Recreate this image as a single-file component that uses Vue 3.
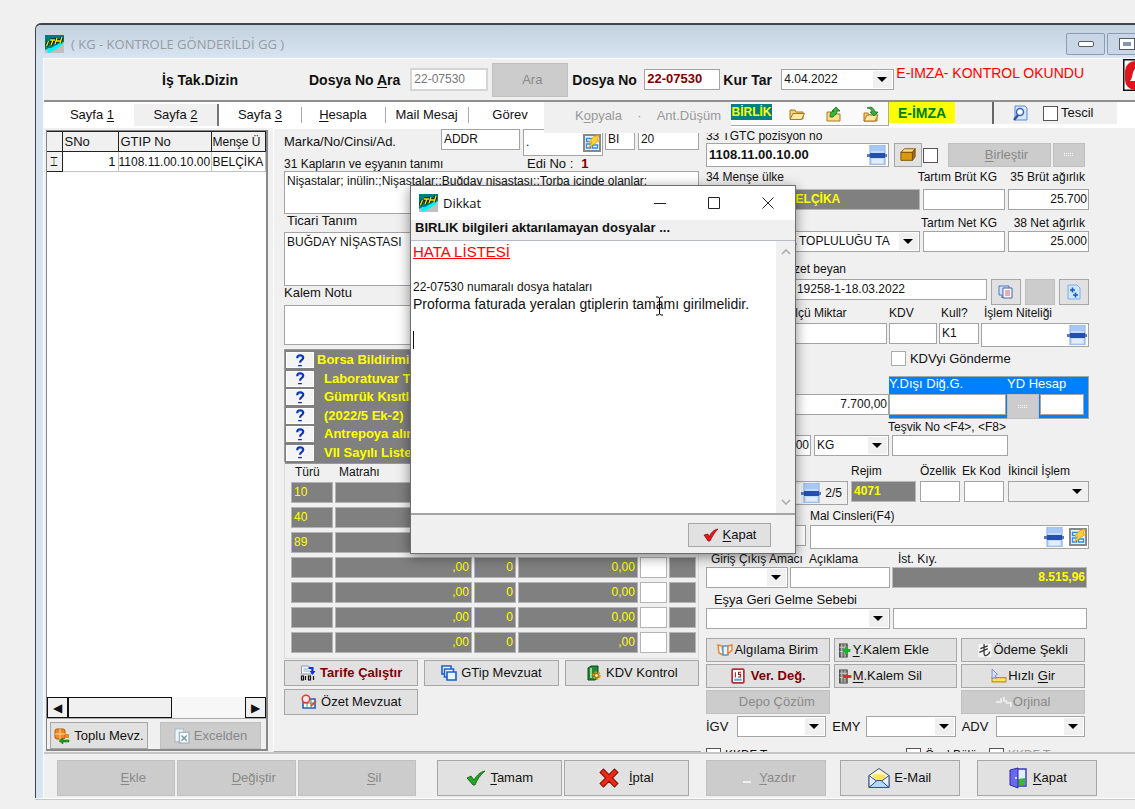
<template>
    <div class="desktop">
        <!-- shared icon shapes -->
        <svg class="defs" aria-hidden="true">
            <symbol id="i-logo" viewBox="0 0 19 18">
                <rect width="19" height="18" fill="#007c80" />
                <path d="M0 18v-3l4-2 3 1 12-7v11z" fill="#c0c0c0" />
                <path d="M2 14l4-1 9-5 4-1-3 4-8 5-5 2z" fill="#00f4f4" />
                <path d="M3.500 6l-2 5M5 5h5M8 5l-2 5M12 3l-2 6M17 2l-2 6M11 6h5" fill="none" stroke="#000" stroke-width="3" />
                <path d="M3.500 6l-2 5M5 5h5M8 5l-2 5M12 3l-2 6M17 2l-2 6M11 6h5" fill="none" stroke="#f4f000" stroke-width="1.400" />
            </symbol>
            <symbol id="i-lookup" viewBox="0 0 20 20">
                <path d="M3 0h15v20H3z" fill="#c4dcfa" stroke="#7fa6e2" />
                <path d="M4 1h13v5H4z" fill="#a7c8f6" />
                <path d="M5 15h11M5 17h11" stroke="#fff" />
                <path d="M0 9h20v3H0z" fill="#5a78b8" />
                <path d="M3 8h15v5H3z" fill="#244fae" />
            </symbol>
            <symbol id="i-bolt" viewBox="0 0 18 18">
                <rect x="1" y="1" width="16" height="16" fill="#e8f4fd" stroke="#888" stroke-width="2" />
                <path d="M3.500 4.500h5v3h-5zM3.500 10h4v4h-4zM9.500 11h5v3h-5z" fill="#fff" stroke="#2d8be8" stroke-width="1.400" />
                <path d="M10 3l6-2-2 5h3L5 14l4-6H6z" fill="#ffd23c" stroke="#e69a10" stroke-width=".8" />
            </symbol>
            <symbol id="i-help" viewBox="0 0 12 14">
                <path d="M3 4.500c0-4 6.500-4 6.500-.5C9.500 6.500 6 6 6 9.500" fill="none" stroke="#0a34b0" stroke-width="2.300" />
                <path d="M4 3.500c1-1.500 3-1.500 4 0" fill="none" stroke="#4f8ef5" stroke-width=".8" />
                <path d="M4 12.500h4" stroke="#0a2c98" stroke-width="1.400" />
            </symbol>
            <symbol id="i-folder" viewBox="0 0 16 16">
                <path d="M1 13V4h5l1 2h7v7z" fill="#f5cf70" stroke="#a87820" />
                <path d="M1 13.500l3-6h11.500l-3 6z" fill="#ffe9a6" stroke="#a87820" />
            </symbol>
            <symbol id="i-up" viewBox="0 0 16 16">
                <path d="M1 15V6h4l1 2h8v7z" fill="#ffdf8a" stroke="#a87820" />
                <path d="M4 11c0-4 1-6 4-6H6l4-4 4 4h-3c0 3-2 4-4 6z" fill="#36b43a" stroke="#136c18" stroke-width=".8" />
            </symbol>
            <symbol id="i-next" viewBox="0 0 16 16">
                <path d="M1 15V7h4l1 2h8v6z" fill="#f5cf70" stroke="#a87820" />
                <path d="M1 15l3-6h11l-3 6z" fill="#ffe9a6" stroke="#a87820" />
                <path d="M4 2c4-2 7 0 8 4h3l-4 4-4-4h2c0-2-2-4-5-4z" fill="#36b43a" stroke="#136c18" stroke-width=".8" />
            </symbol>
            <symbol id="i-preview" viewBox="0 0 16 16">
                <path d="M3 1h10l2 2v12H3z" fill="#d5e6ff" stroke="#5c88d0" />
                <circle cx="8" cy="7" r="3.500" fill="#fff" stroke="#3565b8" stroke-width="1.500" />
                <path d="M6 10l-4 5" stroke="#2e56a4" stroke-width="2.500" />
            </symbol>
            <symbol id="i-box" viewBox="0 0 18 16">
                <path d="M1 5l4-4h12l-3 4z" fill="#ffe08a" stroke="#7a4c00" />
                <path d="M1 5h13v9H1z" fill="#d79a10" stroke="#7a4c00" />
                <path d="M14 5l3-4v9l-3 4z" fill="#a86c00" stroke="#7a4c00" />
            </symbol>
            <symbol id="i-note" viewBox="0 0 16 16">
                <path d="M1 2h10v9H6l-2 3v-3H1z" fill="#cfe2ff" stroke="#4a78c8" />
                <path d="M5 4h9v10H5z" fill="#fff" stroke="#4a5fa8" />
                <path d="M7 7h5M7 9h5M7 11h5" stroke="#c06070" />
            </symbol>
            <symbol id="i-plus" viewBox="0 0 14 16">
                <path d="M1 1h9l3 3v11H1z" fill="#cfe6ff" stroke="#79aef0" />
                <path d="M3 6h5M5.500 3.500v5M6 11h5M8.500 8.500v5" stroke="#1858c0" stroke-width="1.600" />
            </symbol>
            <symbol id="i-book" viewBox="0 0 16 12">
                <path d="M1 1l4 1 1 9-4-2z" fill="#fff" stroke="#f08030" stroke-width="1.500" />
                <path d="M6 11V2h5v9z" fill="#e8f4ff" stroke="#3ba0e8" stroke-width="1.300" />
                <path d="M11 2l4-1v5l-4 4z" fill="#fff" stroke="#f08030" stroke-width="1.500" />
            </symbol>
            <symbol id="i-addrow" viewBox="0 0 12 14">
                <path d="M1 1h7v12H1z" fill="#777" stroke="#444" />
                <path d="M3 1v12M6 1v12M1 4h7M1 8h7" stroke="#ddd" stroke-width=".7" />
                <path d="M4 7h7M7.500 3.500v7" stroke="#18b428" stroke-width="2.600" />
            </symbol>
            <symbol id="i-delrow" viewBox="0 0 12 14">
                <path d="M1 1h7v12H1z" fill="#777" stroke="#444" />
                <path d="M3 1v12M6 1v12M1 4h7M1 8h7" stroke="#ddd" stroke-width=".7" />
                <path d="M4 7h8" stroke="#e02818" stroke-width="2.600" />
            </symbol>
            <symbol id="i-lira" viewBox="0 0 14 16">
                <path d="M0 1h14v14H0z" fill="#f6f6f6" />
                <path d="M6 1v10c0 5 6 1 6-2M2 6l8-3M1 10l9-4" fill="none" stroke="#333" stroke-width="1.300" />
            </symbol>
            <symbol id="i-cal" viewBox="0 0 13 15">
                <rect x="1" y="1" width="11" height="13" rx="1" fill="#fff" stroke="#b03038" stroke-width="1.600" />
                <path d="M3 11h7" stroke="#5ea6dd" stroke-width="2" />
                <path d="M4 4v5M9.500 4H7v2h2v2.500H6.500" fill="none" stroke="#902020" />
            </symbol>
            <symbol id="i-ruler" viewBox="0 0 15 13">
                <path d="M1 8h13v4H1z" fill="#ffe45c" stroke="#c09010" />
                <path d="M1 0l5 5-2 1 1 3-2-1-2 1z" fill="#dde0ff" stroke="#7080c0" stroke-width=".8" />
            </symbol>
            <symbol id="i-tarife" viewBox="0 0 15 16">
                <path d="M1 1h7l3 3v5H1z" fill="#f4f8fd" stroke="#9098a8" />
                <path d="M3 4h5M3 6h6" stroke="#8ab0e0" />
                <path d="M8 3h4v5" fill="none" stroke="#1030f0" stroke-width="2" />
                <path d="M9 6h6l-3 4z" fill="#1030f0" />
                <path d="M1 11h2v4H1zM5 11v4M8 11h2v4H8zM13 11v4" fill="none" stroke="#111" stroke-width="1.200" />
            </symbol>
            <symbol id="i-windows" viewBox="0 0 16 16">
                <path d="M1 1h9v8H1z" fill="#fff" stroke="#1460cc" stroke-width="1.600" />
                <path d="M3.500 4h9v8h-9z" fill="#fff" stroke="#1460cc" stroke-width="1.600" />
                <path d="M6 7h9v8H6z" fill="#eaf4ff" stroke="#1460cc" stroke-width="1.600" />
            </symbol>
            <symbol id="i-kdv" viewBox="0 0 14 16">
                <path d="M1 3l3-2h7v12l-3 2H1z" fill="#208838" stroke="#0a4c18" />
                <path d="M4 3v10" stroke="#b8f0b0" stroke-width="1.500" />
                <circle cx="9.500" cy="10.500" r="3" fill="none" stroke="#e09010" stroke-width="2.500" stroke-dasharray="2 1" />
                <circle cx="9.500" cy="10.500" r="2" fill="#fff0a0" stroke="#b06800" />
            </symbol>
            <symbol id="i-ozet" viewBox="0 0 16 16">
                <path d="M2 5h12v9H2z" fill="#fff" stroke="#1860c8" stroke-width="1.600" />
                <path d="M2 9h12M6 5v9M10 5v9" stroke="#38a060" />
                <circle cx="5" cy="5" r="3.800" fill="#fbe8ec" stroke="#e03838" stroke-width="1.500" />
                <path d="M15 7l-5 5" stroke="#e05030" stroke-width="2" />
            </symbol>
            <symbol id="i-cubes" viewBox="0 0 16 16">
                <rect x="1" y="1" width="10" height="10" rx="2" fill="#f08820" stroke="#b85808" />
                <path d="M1 6h10M6 1v10" stroke="#ffd8a0" />
                <rect x="11" y="6" width="4" height="4" fill="#f08820" />
                <path d="M15 12H9v-2l-4 3 4 3v-2h6z" fill="#18a020" stroke="#0a6810" stroke-width=".5" />
            </symbol>
            <symbol id="i-excel" viewBox="0 0 15 15">
                <path d="M1 1h8v12H1z" fill="#eef4f8" stroke="#a8bccb" />
                <path d="M5 4h9v10H5z" fill="#fff" stroke="#8fa8bb" />
                <path d="M7 7l5 5M12 7l-5 5" stroke="#6d9aa8" stroke-width="1.300" />
            </symbol>
            <symbol id="i-ok" viewBox="0 0 20 16">
                <path d="M1 8l4-2 3 4c3-5 6-8 11-9-5 4-8 9-10 14H7z" fill="#22a822" stroke="#0c5c10" stroke-width=".8" />
            </symbol>
            <symbol id="i-redok" viewBox="0 0 16 14">
                <path d="M1 7l4-1 1 3c2-4 4-7 9-8-4 4-6 8-8 12H5z" fill="#f01414" stroke="#780808" stroke-width=".7" />
            </symbol>
            <symbol id="i-cross" viewBox="0 0 18 18">
                <path d="M4 1l5 5 5-5 3 3-5 5 5 5-3 3-5-5-5 5-3-3 5-5-5-5z" fill="#ee2a14" stroke="#8c0e04" />
            </symbol>
            <symbol id="i-mail" viewBox="0 0 22 21">
                <path d="M1 8l10-7 10 7v12H1z" fill="#fff8c8" stroke="#34508c" />
                <path d="M5 7h12v5l-6 4-6-4z" fill="#ffe458" />
                <path d="M1 8l8 6-8 6zM21 8l-8 6 8 6z" fill="#e4f0ff" stroke="#34508c" />
                <path d="M1 20l8-7h4l8 7z" fill="#b4d8ff" stroke="#34508c" />
            </symbol>
            <symbol id="i-door" viewBox="0 0 18 22">
                <path d="M8 2h9v17H8z" fill="#dff0ff" stroke="#3838b8" stroke-width="1.400" />
                <path d="M9 12l7-1v7H9z" fill="#38b838" />
                <path d="M1 3l8-2v20l-8-3z" fill="#6a68f0" stroke="#2c28a0" />
                <circle cx="7" cy="11" r="1" fill="#fff" />
            </symbol>
            <symbol id="i-dots" viewBox="0 0 10 4">
                <path d="M0 .5h10M0 2.500h10" stroke="#fff" stroke-dasharray="1 1" />
            </symbol>
            <symbol id="i-bell" viewBox="0 0 32 32">
                <rect width="32" height="32" fill="#fff" stroke="#111" stroke-width="3" />
                <rect x="2" y="2" width="29" height="29" rx="10" fill="#e0141c" />
                <path d="M7 22c4-4 1-13 9-14 8 1 5 10 9 14z" fill="#fff" />
            </symbol>
        </svg>

        <div class="window">
            <header class="titlebar">
                <svg class="logo"><use href="#i-logo" /></svg>
                <span class="caption">( KG - KONTROLE GÖNDERİLDİ GG )</span>
                <div class="sysbuttons">
                    <button aria-label="Küçült"><span class="min-mark"></span></button>
                    <button aria-label="Büyüt"><span class="max-mark"></span></button>
                </div>
            </header>

            <div class="frame">
                <section class="search-bar">
                    <b class="is-tak">İş Tak.Dizin</b>
                    <label class="b" for="ara">Dosya No <u>A</u>ra</label>
                    <input id="ara" class="ara-input" value="22-07530" disabled>
                    <button class="btn off ara-btn" disabled>Ara</button>
                    <label class="b" for="dosya">Dosya No</label>
                    <input id="dosya" class="dosya-input" value="22-07530">
                    <label class="b" for="kur">Kur Tar</label>
                    <span class="combo kur"><select id="kur"><option>4.04.2022</option></select></span>
                    <span class="alert">E-IMZA- KONTROL OKUNDU</span>
                    <svg class="bell"><use href="#i-bell" /></svg>
                </section>

                <nav class="tabs">
                    <button class="tab t1">Sayfa <u>1</u></button>
                    <button class="tab t2 active">Sayfa <u>2</u></button>
                    <button class="tab t3">Sayfa <u>3</u></button>
                    <button class="tab t4"><u>H</u>esapla</button>
                    <button class="tab t5">Mail Mesaj</button>
                    <button class="tab t6">Görev</button>
                    <div class="dead-tabs">
                        <button disabled>K<u>o</u>pyala</button>
                        <span>·</span>
                        <button disabled class="ant">Ant.Düşüm</button>
                    </div>
                    <div class="tools">
                        <button class="birlik">BİRLİK</button>
                        <button class="tool" aria-label="Aç"><svg><use href="#i-folder" /></svg></button>
                        <button class="tool" aria-label="Yükle"><svg><use href="#i-up" /></svg></button>
                        <button class="tool" aria-label="Aktar"><svg><use href="#i-next" /></svg></button>
                    </div>
                    <button class="eimza">E-İMZA</button>
                    <div class="tescil">
                        <button class="tool" aria-label="Önizleme"><svg><use href="#i-preview" /></svg></button>
                        <label><input type="checkbox"> Tescil</label>
                    </div>
                </nav>

                <main class="content">
                    <aside class="list">
                        <table>
                            <thead>
                                <tr><th></th><th>SNo</th><th>GTIP No</th><th class="mense">Menşe Ü</th></tr>
                            </thead>
                            <tbody>
                                <tr><td class="mark">⌶</td><td class="num">1</td><td class="code">1108.11.00.10.00</td><td class="mense">BELÇİKA</td></tr>
                            </tbody>
                        </table>
                        <div class="hscroll">
                            <button aria-label="Sola">◀</button>
                            <span class="thumb"></span>
                            <button aria-label="Sağa">▶</button>
                        </div>
                        <div class="list-buttons">
                            <button class="btn"><svg class="ic16"><use href="#i-cubes" /></svg>Toplu Mevz.</button>
                            <button class="btn off" disabled><svg class="ic16"><use href="#i-excel" /></svg>Excelden</button>
                        </div>
                    </aside>

                    <section class="middle">
                        <div class="marka">
                            <label for="marka">Marka/No/Cinsi/Ad.</label>
                            <input id="marka" class="m1" value="ADDR">
                            <span class="with-icon m2"><input aria-label="Marka no" value="."><svg class="ic18"><use href="#i-bolt" /></svg></span>
                            <input class="m3" aria-label="Cins" value="BI">
                            <input class="m4" aria-label="Adet" value="20">
                        </div>
                        <div class="kap-label">
                            <label for="kap">31 Kapların ve eşyanın tanımı</label>
                            <span>Edi No :</span><b>1</b>
                        </div>
                        <textarea id="kap" class="kap" :value="kaplar"></textarea>
                        <label class="tic-label" for="tic">Ticari Tanım</label>
                        <textarea id="tic" class="tic" value="BUĞDAY NİŞASTASI"></textarea>
                        <label class="not-label" for="kalemnot">Kalem Notu</label>
                        <textarea id="kalemnot" class="kalemnot"></textarea>

                        <div class="warnings">
                            <div v-for="(w, i) in warnings" :key="i" class="warning">
                                <button aria-label="Yardım"><svg><use href="#i-help" /></svg></button>
                                <b>{{ w }}</b>
                            </div>
                        </div>

                        <div class="taxes">
                            <table>
                                <thead>
                                    <tr><th class="c1">Türü</th><th class="c2">Matrahı</th><th class="c3"></th><th class="c4"></th><th class="c5"></th><th class="c6"></th></tr>
                                </thead>
                                <tbody>
                                    <tr v-for="(t, i) in taxes" :key="i">
                                        <td class="type">{{ t.type }}</td>
                                        <td>{{ t.base }}</td>
                                        <td>{{ t.rate }}</td>
                                        <td>{{ t.amount }}</td>
                                        <td class="white"></td>
                                        <td></td>
                                    </tr>
                                </tbody>
                            </table>
                        </div>

                        <div class="mid-buttons">
                            <button class="btn dark"><svg class="ic16"><use href="#i-tarife" /></svg>Tarife Çalıştır</button>
                            <button class="btn"><svg class="ic16"><use href="#i-windows" /></svg>GTip Mevzuat</button>
                            <button class="btn"><svg class="ic16"><use href="#i-kdv" /></svg>KDV Kontrol</button>
                            <button class="btn"><svg class="ic16"><use href="#i-ozet" /></svg>Özet Mevzuat</button>
                        </div>
                    </section>

                    <section class="right">
                        <div class="row gtc-label"><label for="gtc">33 TGTC pozisyon no</label></div>
                        <div class="row code-row">
                            <span class="with-icon grow"><input id="gtc" class="bold" value="1108.11.00.10.00"><svg class="ic20"><use href="#i-lookup" /></svg></span>
                            <button class="btn box-btn" aria-label="Paket"><svg class="ic16"><use href="#i-box" /></svg></button>
                            <input type="checkbox" aria-label="Seç">
                            <button class="btn off birlestir" disabled><span><u>B</u>irleştir</span></button>
                            <button class="btn off more" disabled aria-label="Diğer"><svg><use href="#i-dots" /></svg></button>
                        </div>

                        <div class="row weights">
                            <label for="ulke">34 Menşe ülke</label><label for="tbrut">Tartım Brüt KG</label><label for="brut">35 Brüt ağırlık</label>
                        </div>
                        <div class="row weights">
                            <input id="ulke" class="gray belcika" value="BELÇİKA"><input id="tbrut"><input id="brut" class="num" value="25.700">
                        </div>
                        <div class="row weights">
                            <span></span><label for="tnet">Tartım Net KG</label><label for="net">38 Net ağırlık</label>
                        </div>
                        <div class="row weights">
                            <span class="combo"><select aria-label="Topluluk" class="avrupa"><option>AVRUPA TOPLULUĞU TA</option></select></span><input id="tnet"><input id="net" class="num" value="25.000">
                        </div>

                        <div class="row beyan-label"><label for="beyan">40 Özet beyan</label></div>
                        <div class="row beyan">
                            <input id="beyan" value="19258-1-18.03.2022">
                            <button class="btn" aria-label="Notlar"><svg class="ic16"><use href="#i-note" /></svg></button>
                            <button class="btn off" disabled aria-label="Boş"></button>
                            <button class="btn" aria-label="Ekle"><svg class="ic16"><use href="#i-plus" /></svg></button>
                        </div>

                        <div class="row olcu">
                            <label for="olcu">Ölçü Miktar</label><label for="kdv">KDV</label><label for="kull">Kull?</label><label for="nitelik">İşlem Niteliği</label>
                        </div>
                        <div class="row olcu">
                            <input id="olcu"><input id="kdv"><input id="kull" value="K1"><span class="with-icon"><input id="nitelik"><svg class="ic20"><use href="#i-lookup" /></svg></span>
                        </div>
                        <div class="row kdv-check"><label><input type="checkbox"> KDVyi Gönderme</label></div>

                        <div class="row abroad">
                            <input class="num" aria-label="Tutar" value="7.700,00">
                            <div class="blue">
                                <label for="ydisi">Y.Dışı Diğ.G.</label><label class="ydh" for="ydh">YD Hesap</label>
                                <input id="ydisi"><button class="btn off more" disabled aria-label="Diğer"><svg><use href="#i-dots" /></svg></button><input id="ydh">
                            </div>
                        </div>
                        <div class="row tesvik"><span></span><span></span><label for="tesvik">Teşvik No &lt;F4&gt;, &lt;F8&gt;</label></div>
                        <div class="row tesvik">
                            <input class="num" aria-label="Miktar" value="25.000,00"><span class="combo"><select aria-label="Birim"><option>KG</option></select></span><input id="tesvik">
                        </div>

                        <div class="row rejim">
                            <span></span><label for="rejim">Rejim</label><label for="ozellik">Özellik</label><label for="ekkod">Ek Kod</label><label for="ikincil">İkincil İşlem</label>
                        </div>
                        <div class="row rejim">
                            <span class="with-icon step"><input aria-label="Kod"><svg class="ic20"><use href="#i-lookup" /></svg><i>2/5</i></span>
                            <input id="rejim" class="gray" value="4071"><input id="ozellik"><input id="ekkod">
                            <span class="combo plain"><select id="ikincil"><option></option></select></span>
                        </div>

                        <div class="row mal"><span></span><label for="mal">Mal Cinsleri(F4)</label></div>
                        <div class="row mal">
                            <input aria-label="Cins kodu"><span class="with-icon"><input id="mal"><svg class="ic20"><use href="#i-lookup" /></svg><svg class="ic18"><use href="#i-bolt" /></svg></span>
                        </div>

                        <div class="row giris">
                            <label for="giris">Giriş Çıkış Amacı</label><label for="aciklama">Açıklama</label><label for="kiy">İst. Kıy.</label>
                        </div>
                        <div class="row giris">
                            <span class="combo"><select id="giris"><option></option></select></span><input id="aciklama"><input id="kiy" class="gray num" value="8.515,96">
                        </div>
                        <div class="row esya-label"><label for="esya">Eşya Geri Gelme Sebebi</label></div>
                        <div class="row esya">
                            <span class="combo"><select id="esya"><option></option></select></span><input aria-label="Sebep açıklaması">
                        </div>

                        <div class="row thirds">
                            <button class="btn"><svg class="ic16"><use href="#i-book" /></svg>Algılama Birim</button>
                            <button class="btn start"><svg class="ic14"><use href="#i-addrow" /></svg><span><u>Y</u>.Kalem Ekle</span></button>
                            <button class="btn"><svg class="ic14"><use href="#i-lira" /></svg>Ödeme Şekli</button>
                        </div>
                        <div class="row thirds">
                            <button class="btn dark"><svg class="ic16"><use href="#i-cal" /></svg>Ver. Değ.</button>
                            <button class="btn start"><svg class="ic14"><use href="#i-delrow" /></svg><span><u>M</u>.Kalem Sil</span></button>
                            <button class="btn"><svg class="ic16"><use href="#i-ruler" /></svg><span>Hızlı <u>G</u>ir</span></button>
                        </div>
                        <div class="row thirds">
                            <button class="btn off depo" disabled>Depo Çözüm</button>
                            <span></span>
                            <button class="btn off" disabled><svg class="ic16" viewBox="0 0 16 12"><path d="M0 6h5V2M8 1v4h3M10 7h5v4" fill="none" stroke="#f4f4f4" stroke-width="1.500" /></svg>Orjinal</button>
                        </div>
                        <div class="row levies">
                            <label for="igv">İGV</label><span class="combo"><select id="igv"><option></option></select></span>
                            <label for="emy">EMY</label><span class="combo"><select id="emy"><option></option></select></span>
                            <label for="adv">ADV</label><span class="combo"><select id="adv"><option></option></select></span>
                        </div>
                        <div class="row flags">
                            <label><input type="checkbox"> KKDF Tam.</label>
                            <label><input type="checkbox" checked> Özel Bölüm</label>
                            <label class="faint"><input type="checkbox"> KKDF Tam.</label>
                        </div>
                    </section>
                </main>

                <footer class="actions">
                    <div class="group g3">
                        <button class="btn off" disabled><span><u>E</u>kle</span></button>
                        <button class="btn off" disabled><span><u>D</u>eğiştir</span></button>
                        <button class="btn off" disabled><span><u>S</u>il</span></button>
                    </div>
                    <div class="group g2">
                        <button class="btn"><svg class="ic20"><use href="#i-ok" /></svg><span><u>T</u>amam</span></button>
                        <button class="btn wide-gap"><svg class="ic20"><use href="#i-cross" /></svg><span><u>İ</u>ptal</span></button>
                    </div>
                    <button class="btn off yazdir" disabled><i class="dash"></i><span><u>Y</u>azdır</span></button>
                    <button class="btn mail"><svg class="ic22"><use href="#i-mail" /></svg>E-Mail</button>
                    <button class="btn kapat"><svg class="ic22"><use href="#i-door" /></svg><span><u>K</u>apat</span></button>
                </footer>
            </div>
        </div>

        <!-- error list dialog -->
        <div v-if="open" class="dialog" role="dialog" aria-label="Dikkat">
            <header class="dlg-title">
                <svg class="logo"><use href="#i-logo" /></svg>
                <span>Dikkat</span>
                <button aria-label="Küçült"><svg viewBox="0 0 12 12"><path d="M0 6.500h12" /></svg></button>
                <button aria-label="Büyüt"><svg viewBox="0 0 12 12"><path d="M.5.5h11v11H.5z" /></svg></button>
                <button aria-label="Kapat" @click="open = false"><svg viewBox="0 0 12 12"><path d="M.5.5l11 11M11.500.5l-11 11" /></svg></button>
            </header>
            <b class="dlg-head">BIRLIK bilgileri aktarılamayan dosyalar ...</b>
            <div class="dlg-body">
                <div class="dlg-text">
                    <p class="red">HATA LİSTESİ</p>
                    <p class="small">22-07530 numaralı dosya hataları</p>
                    <p>Proforma faturada yeralan gtiplerin tamamı girilmelidir.</p>
                    <span class="caret"></span>
                </div>
                <div class="vscroll">
                    <svg viewBox="0 0 10 6"><path d="M1 5l4-4 4 4" /></svg>
                    <svg viewBox="0 0 10 6"><path d="M1 1l4 4 4-4" /></svg>
                </div>
                <svg class="pointer" viewBox="0 0 9 20"><path d="M1 1h2l1.500 1L6 1h2M4.500 2v16M1 19h2l1.500-1L6 19h2" /></svg>
            </div>
            <footer class="dlg-foot">
                <button class="btn" @click="open = false"><svg class="ic16"><use href="#i-redok" /></svg><span><u>K</u>apat</span></button>
            </footer>
        </div>
    </div>
</template>

<script setup>
import { ref } from 'vue';

const open = ref(true);

const kaplar = 'Nişastalar; inülin:;Nişastalar:;Buğday nişastası:;Torba içinde olanlar;';

const warnings = [
    'Borsa Bildirimi',
    'Laboratuvar Tahlili',
    'Gümrük Kısıtlaması',
    '(2022/5 Ek-2)',
    'Antrepoya alınan',
    'VII Sayılı Liste'
];

const taxes = [
    { type: '10', base: '', rate: '', amount: '' },
    { type: '40', base: '', rate: '', amount: '' },
    { type: '89', base: '', rate: '', amount: '' },
    { type: '', base: ',00', rate: '0', amount: '0,00' },
    { type: '', base: ',00', rate: '0', amount: '0,00' },
    { type: '', base: ',00', rate: '0', amount: '0,00' },
    { type: '', base: ',00', rate: '0', amount: ',00' }
];
</script>

<style>
body {
    background: #f0f0f0;
    overflow: hidden;
}
</style>

<style scoped>
.desktop {
    position: relative;
    box-sizing: border-box;
    height: 100vh;
    padding: 23px 0 11px 35px;
    overflow: hidden;
    background: #f0f0f0;
    color: #111;
    font: 13px/14px "Liberation Sans", Arial, sans-serif;
}
.desktop * {
    box-sizing: border-box;
}
.defs {
    position: absolute;
    width: 0;
    height: 0;
}
svg {
    display: block;
    flex-shrink: 0;
}
.ic14 { width: 14px; height: 15px; }
.ic16 { width: 16px; height: 16px; }
.ic18 { width: 18px; height: 18px; }
.ic20 { width: 20px; height: 20px; }
.ic22 { width: 22px; height: 22px; }
.logo { width: 19px; height: 18px; }

/* window frame */
.window {
    height: 100%;
    display: flex;
    flex-direction: column;
    border: solid #41444b;
    border-width: 2px 0 0 1px;
    border-top-left-radius: 6px;
    background: #d7e4f2;
    box-shadow: 0 1px 0 #fff, 0 2px 0 #c8c8c8;
}
.titlebar {
    flex: 0 0 33px;
    display: flex;
    align-items: center;
    padding: 5px 0 0 9px;
    overflow: hidden;
    border-top-left-radius: 5px;
    background: linear-gradient(#c3d0de, #d7e4f2);
}
.caption {
    margin-left: 7px;
    color: #969ba2;
    font-family: "Open Sans", "Noto Sans", sans-serif;
    font-size: 13px;
    line-height: 18px;
}
.sysbuttons {
    display: flex;
    gap: 2px;
    margin-left: auto;
    margin-right: -11px;
}
.sysbuttons button {
    display: grid;
    place-items: center;
    width: 39px;
    height: 22px;
    padding: 0;
    border: 1px solid #8d9cb0;
    border-radius: 2px;
    background: #c9d6e5;
}
.min-mark {
    width: 16px;
    height: 6px;
    border: 1px solid #555b66;
    border-radius: 2px;
    background: #fff;
}
.max-mark {
    width: 16px;
    height: 12px;
    border: 1px solid #555b66;
    background: #8898ac;
    box-shadow: inset 0 0 0 3px #fff;
}
.frame {
    flex: 1;
    min-height: 0;
    margin-left: 7px;
    display: flex;
    flex-direction: column;
    border-left: 1px solid #fff;
    background: #f0f0f0;
}

/* controls */
button,
input,
select,
textarea {
    font: inherit;
    color: inherit;
    margin: 0;
    border-radius: 0;
    outline: none;
}
u {
    text-underline-offset: 2px;
}
input,
textarea {
    min-width: 0;
    height: 21px;
    padding: 0 2px 2px;
    border: 1px solid #a4a4a4;
    background: #fff;
    font-size: 12px;
}
textarea {
    display: block;
    width: 100%;
    padding: 2px;
    resize: none;
    overflow: hidden;
    line-height: 14px;
}
input.num {
    text-align: right;
    padding-right: 1px;
}
input.bold {
    font-weight: bold;
    font-size: 13px;
}
input.gray {
    background: #808080;
    border-color: #b8b8b8;
    color: #ff0;
    font-weight: bold;
}
input[type="checkbox"] {
    appearance: none;
    width: 15px;
    height: 15px;
    padding: 0;
    flex-shrink: 0;
    border: 1px solid #555;
}
.btn {
    display: flex;
    align-items: center;
    justify-content: center;
    gap: 4px;
    min-width: 0;
    height: 24px;
    padding: 0;
    border: 1px solid #a6a6a6;
    background: #e1e1e1;
    white-space: nowrap;
}
.btn.off {
    background: #ccc;
    border-color: #c0c0c0;
    color: #898989;
}
.btn.dark {
    color: #800000;
    font-weight: bold;
}
.combo {
    position: relative;
    display: block;
    height: 21px;
    border: 1px solid #a4a4a4;
    background: #fff;
}
.combo select {
    appearance: none;
    width: 100%;
    height: 100%;
    padding: 0 20px 2px 2px;
    border: 0;
    background: none;
    font-size: 12px;
}
.combo::after {
    content: "";
    position: absolute;
    top: 7px;
    right: 6px;
    border: solid transparent;
    border-width: 5px 5px 0;
    border-top-color: #000;
    pointer-events: none;
}
.combo::before {
    content: "";
    position: absolute;
    inset: 1px 1px 1px auto;
    width: 19px;
    background: #f0f0f0;
}
.combo.plain {
    background: #f0f0f0;
}
.with-icon {
    display: flex;
    align-items: center;
    min-width: 0;
    height: 24px;
    padding-right: 1px;
    border: 1px solid #a4a4a4;
    background: #fff;
}
.with-icon input {
    flex: 1;
    border: 0;
    height: 19px;
}

/* search bar */
.search-bar {
    flex: 0 0 44px;
    display: flex;
    align-items: center;
    overflow: hidden;
    border-top: 1px solid #fff;
    border-bottom: 2px solid #8f8f8f;
}
.search-bar b,
.search-bar .b {
    font-weight: bold;
    font-size: 14px;
    white-space: nowrap;
}
.is-tak {
    width: 147px;
    margin-left: 118px;
}
.search-bar .ara-input {
    width: 78px;
    height: 23px;
    margin: 0 4px 0 10px;
    border: 2px solid #d5d5d5;
    color: #777;
}
.ara-btn {
    width: 76px;
    height: 34px;
    margin-right: 4px;
    padding-left: 4px;
}
.search-bar .dosya-input {
    width: 76px;
    margin-right: 3px;
    color: #800000;
    font-weight: bold;
    font-size: 13px;
}
label[for="dosya"] { width: 72px; }
label[for="kur"] { width: 58px; }
.kur { width: 113px; }
.alert {
    margin: 0 auto 14px 2px;
    color: #f00;
    font-size: 14px;
    white-space: nowrap;
}
.bell {
    width: 32px;
    height: 32px;
    margin: 0 -20px 10px 0;
}

/* tabs */
.tabs {
    position: relative;
    z-index: 1;
    flex: 0 0 26px;
    min-height: 0;
    display: flex;
    padding-left: 1px;
    background: #fff;
}
.tabs button {
    padding: 0;
    border: 0;
    background: none;
    white-space: nowrap;
}
.tab {
    height: 22px;
    margin-top: 2px;
}
.tabs .t1 { width: 89px; padding-left: 5px; }
.tabs .t2 { width: 83px; background: #f0f0f0; }
.tabs .t3 { width: 84px; border-left: 2px solid #777; }
.tabs .t4 { width: 84px; }
.tabs .t5 { width: 83px; }
.tabs .t6 { width: 76px; padding-left: 8px; }
.t4, .t5, .t6 { background: linear-gradient(#aaa, #aaa) left center / 1px 16px no-repeat !important; }
.dead-tabs {
    display: flex;
    align-items: center;
    justify-content: space-between;
    flex-shrink: 0;
    width: 187px;
    height: 31px;
    padding: 0 10px 4px 31px;
    background: #f0f0f0;
    color: #999;
}
.dead-tabs button { color: #999; }
.tools {
    display: flex;
    gap: 4px;
    width: 158px;
    height: 24px;
    border-bottom: 1px solid #aaa;
    border-right: 1px solid #aaa;
    background: #fafafa;
}
.tabs .birlik {
    width: 41px;
    height: 16px;
    margin: 2px 4px 0 0;
    background: #008080;
    color: #ff0;
    font-weight: bold;
    font-size: 12px;
    line-height: 14px;
}
.tools .tool {
    width: 33px;
}
.tool svg {
    width: 16px;
    height: 16px;
    margin: 0 auto;
}
.tabs .eimza {
    width: 66px;
    height: 21px;
    background: #ff0;
    color: #008000;
    font-weight: bold;
    font-size: 14px;
}
.tescil {
    flex: 1;
    display: flex;
    align-items: center;
    gap: 15px;
    height: 22px;
    margin-right: 18px;
    padding-left: 57px;
    background: linear-gradient(#666, #666) 37px 0 / 2px 22px no-repeat #f0f0f0;
}
.tescil label {
    display: flex;
    align-items: center;
    gap: 3px;
}

/* content */
.content {
    flex: 1;
    min-height: 0;
    display: grid;
    grid-template-columns: 224px minmax(0, 429fr) minmax(0, 384fr);
    grid-template-rows: minmax(0, 1fr);
    gap: 5px;
    padding-right: 46px;
    overflow: hidden;
}
.list {
    display: flex;
    flex-direction: column;
    margin: 2px 0 1px 2px;
    min-height: 0;
    border: solid #888;
    border-width: 1px 2px 2px 1px;
    background: #fff;
}
.list table {
    width: 100%;
    table-layout: fixed;
    border-collapse: collapse;
}
.list th,
.list td {
    height: 20px;
    padding: 0 2px;
    border-right: 1px solid #c0c0c0;
    border-bottom: 1px solid #c0c0c0;
    font-weight: normal;
    text-align: left;
    white-space: nowrap;
}
.list th {
    background: #f0f0f0;
    border-color: #222;
    border-top: 1px solid #222;
}
.list th:nth-child(1) { width: 15px; }
.list th:nth-child(2) { width: 56px; }
.list th:nth-child(3) { width: 93px; }
.list td.num { text-align: right; }
.list td.code { font-size: 12px; padding: 0; }
.list .mense { padding: 0 0 0 1px; font-size: 12px; }
.list td.mark { border-color: #222; background: #f0f0f0; padding: 0; text-align: center; }
.hscroll {
    display: flex;
    height: 21px;
    margin-top: auto;
    background: #f7f7f7;
}
.hscroll button {
    width: 21px;
    padding: 0;
    border: 1px solid #111;
    background: #f0f0f0;
    font-size: 12px;
}
.hscroll button:last-child {
    margin-left: auto;
}
.thumb {
    width: 104px;
    border: 1px solid #111;
    background: #f0f0f0;
}
.list-buttons {
    display: flex;
    justify-content: space-between;
    padding: 3px 5px 0 3px;
    border-top: 1px solid #aaa;
    background: #f0f0f0;
}
.list-buttons .btn {
    width: 101px;
    height: 27px;
}
.list-buttons .btn:first-child {
    width: 98px;
}

/* middle form */
.middle {
    padding-left: 10px;
    padding-right: 2px;
    border: solid #fff;
    border-width: 1px 0 1px 1px;
    border-bottom-color: #aaa;
    min-width: 0;
}
.middle label,
.right label {
    font-size: 12px;
}
.marka {
    display: flex;
    height: 28px;
}
.marka label {
    flex: 1;
    padding-top: 6px;
    font-size: 13px;
}
.marka .m1 { width: 79px; margin-right: 3px; }
.marka .m2 { width: 80px; height: 27px; margin-right: 2px; }
.marka .m3 { width: 30px; margin-right: 3px; }
.marka .m4 { width: 61px; }
.kap-label {
    display: flex;
    height: 14px;
}
.kap-label label { width: 243px; }
.kap-label b {
    margin-left: 8px;
    color: #800000;
}
.kap { height: 43px; }
.middle .tic-label,
.middle .not-label {
    display: block;
    height: 18px;
    font-size: 13px;
}
.tic-label { padding-left: 3px; }
.tic { height: 54px; }
.middle .not-label { height: 19px; }
.kalemnot { height: 40px; }
.warnings {
    display: grid;
    grid-auto-rows: 1fr;
    height: 115px;
    margin-top: 4px;
    padding: 1px 0;
    border: 1px solid #999;
    background: #808080;
}
.warning {
    display: flex;
    align-items: center;
    color: #ff0;
}
.warning button {
    width: 28px;
    height: 16px;
    margin-left: 1px;
    padding: 0;
    border: 1px solid #fff;
    background: #f4f4f4;
}
.warning svg {
    width: 12px;
    height: 13px;
    margin: 0 auto;
}
.warning b {
    padding-left: 10px;
    white-space: nowrap;
}
.warning:first-child b {
    padding-left: 3px;
}
.taxes {
    height: 197px;
    padding-left: 4px;
    border: 1px solid #dcdcdc;
    border-top: 0;
}
.taxes table {
    width: 100%;
    height: 195px;
    table-layout: fixed;
    border-spacing: 2px 4px;
    margin-top: -2px;
}
.taxes th {
    height: 12px;
    padding: 0 4px;
    font-weight: normal;
    font-size: 12px;
    text-align: left;
    line-height: 12px;
}
.taxes td {
    padding: 0 2px 2px;
    border: 1px solid #b4b4b4;
    background: #808080;
    color: #ff0;
    text-align: right;
    font-size: 12px;
    line-height: 12px;
}
.taxes td.type { text-align: left; }
.taxes td.white { background: #fff; }
.c1, .c3 { width: 42px; }
.c4 { width: 120px; }
.c5, .c6 { width: 27px; }
.mid-buttons {
    display: grid;
    grid-template-columns: repeat(3, 1fr);
    gap: 3px 6px;
    margin-top: 1px;
}
.mid-buttons .btn {
    height: 26px;
}

/* right form */
.right {
    min-width: 0;
    display: grid;
    grid-template-columns: minmax(0, 1fr);
    grid-template-rows: 15px 27px 19px 27px 15px 31px 17px 27px 17px 28px 25px 44px 15px 29px 17px 28px 16px 27px 15px 26px 15px 30px 26px 26px 26px 32px 20px;
}
.row {
    display: grid;
    align-items: start;
    align-content: start;
    white-space: nowrap;
}
.row label {
    min-width: 0;
}
.gtc-label { padding-top: 1px; }
.code-row {
    display: flex;
}
.grow { flex: 1; }
.box-btn { width: 28px; margin: 0 1px 0 5px; }
.code-row input[type="checkbox"] { margin-top: 5px; }
.birlestir { width: 103px; margin: 0 2px 0 10px; padding-left: 14px; }
.more { width: 32px; margin-right: 4px; }
.more svg { width: 10px; height: 4px; }
.weights {
    grid-template-columns: minmax(0, 1fr) 82px 81px;
    column-gap: 3px;
}
.weights label + label,
.weights span + label {
    justify-self: end;
    margin-right: 8px;
}
.weights label:last-child { margin-right: 4px; }
.belcika { padding-left: 80px; }
.combo .avrupa { padding-left: 42px; padding-right: 0; }
.beyan-label { padding-left: 62px; }
.beyan {
    grid-template-columns: minmax(0, 1fr) 30px 30px 30px;
    column-gap: 4px;
}
.beyan > input { padding-left: 90px; }
.beyan .btn { height: 26px; }
.olcu {
    grid-template-columns: minmax(0, 1fr) 48px 40px 108px;
    column-gap: 2px;
}
.olcu label:first-child { padding-left: 80px; }
.olcu label:nth-child(3) { padding-left: 2px; }
.olcu label:last-child { padding-left: 3px; }
.kdv-check { padding-left: 185px; }
.kdv-check label {
    display: flex;
    align-items: center;
    gap: 4px;
    font-size: 13px;
}
.kdv-check input[type="checkbox"] { border-color: #aaa; }
.abroad {
    grid-template-columns: minmax(0, 1fr) 200px;
}
.abroad > input {
    margin-top: 18px;
}
.blue {
    display: grid;
    grid-template-columns: 117px 32px 44px;
    grid-template-rows: 17px 26px;
    column-gap: 1px;
    height: 43px;
    border: 1px solid #9aa;
    border-left: 0;
    background: #0080ff;
    color: #fff;
}
.right .blue label { font-size: 13px; line-height: 13px; }
.blue .ydh { grid-column: span 2; }
.blue input { color: #111; }
.blue .btn { height: 25px; margin-right: 0; }
.tesvik {
    grid-template-columns: minmax(0, 1fr) 75px 116px 78px;
    column-gap: 3px;
}
.tesvik label { margin-left: -4px; }
.rejim {
    grid-template-columns: minmax(0, 1fr) 65px 40px 40px 81px;
    column-gap: 4px;
}
.rejim label:nth-child(4) { margin-left: -2px; }
.step { background: #f0f0f0; margin-right: -1px; }
.step i {
    padding: 0 4px;
    font-style: normal;
    font-size: 12px;
}
.mal {
    grid-template-columns: 100px minmax(0, 1fr);
    column-gap: 4px;
}
.mal .with-icon { gap: 5px; }
.giris {
    grid-template-columns: 82px minmax(0, 100fr) minmax(0, 195fr);
    column-gap: 2px;
    padding-right: 2px;
}
.giris label:first-child { padding-left: 5px; }
.giris label:nth-child(2) { padding-left: 19px; }
.giris label:nth-child(3) { padding-left: 6px; }
.esya-label { padding-left: 8px; }
.right .esya-label label { font-size: 13px; }
.esya {
    grid-template-columns: minmax(0, 184fr) minmax(0, 194fr);
    column-gap: 3px;
    padding-right: 2px;
}
.thirds {
    grid-template-columns: repeat(3, minmax(0, 1fr));
    column-gap: 4px;
    padding-right: 4px;
}
.thirds .btn { gap: 1px; }
.thirds .dark { gap: 5px; }
.thirds .start {
    justify-content: flex-start;
    padding-left: 3px;
}
.depo { padding-left: 18px; }
.levies {
    grid-template-columns: 25px minmax(0, 1fr) 28px minmax(0, 1fr) 28px minmax(0, 1fr);
    column-gap: 6px;
    padding-right: 4px;
}
.right .levies label { padding-top: 4px; font-size: 13px; }
.flags {
    grid-template-columns: 200px 83px 1fr;
}
.flags label {
    display: flex;
    gap: 4px;
}
.faint { color: #999; }

/* footer */
.actions {
    flex: 0 0 46px;
    display: flex;
    align-items: center;
    padding: 3px 38px 0 13px;
    border-top: 2px solid #c4c4c4;
}
.actions .btn {
    flex: 1 1 0;
    height: 36px;
}
.group {
    display: flex;
    gap: 2px;
}
.group .off span { margin-left: 34px; }
.group.g3 { flex: 362 1 0; margin-right: 21px; }
.group.g2 { flex: 253 1 0; margin-right: 17px; }
.actions .yazdir,
.actions .mail,
.actions .kapat { flex: 119 1 0; }
.actions .yazdir { gap: 8px; }
.actions .mail { margin: 0 17px 0 14px; }
.actions .wide-gap { gap: 10px; }
.dash {
    width: 8px;
    height: 2px;
    margin: 8px 0 0 8px;
    background: #f0f0f0;
}

/* dialog */
.dialog {
    position: absolute;
    z-index: 5;
    left: 410px;
    top: 185px;
    width: 386px;
    height: 369px;
    display: flex;
    flex-direction: column;
    border: 1px solid #6e6e6e;
    background: #f0f0f0;
    box-shadow: 0 3px 12px rgba(0, 0, 0, 0.45);
}
.dlg-title {
    display: flex;
    align-items: center;
    height: 34px;
    padding-left: 8px;
    background: #fff;
}
.dlg-title span {
    flex: 1;
    margin-left: 5px;
    font: 13px/18px "Open Sans", "Noto Sans", sans-serif;
}
.dlg-title button {
    width: 54px;
    height: 100%;
    padding: 0;
    border: 0;
    background: none;
}
.dlg-title button svg {
    width: 12px;
    height: 12px;
    margin: 0 auto;
    fill: none;
    stroke: #222;
}
.dlg-head {
    height: 20px;
    padding: 1px 4px;
    white-space: nowrap;
}
.dlg-body {
    position: relative;
    flex: 1;
    display: flex;
    border-top: 1px solid #b8bcc4;
    border-bottom: 2px solid #a4a4a4;
    background: #fff;
}
.dlg-text {
    flex: 1;
    padding: 2px;
    font-size: 14px;
    line-height: 18px;
}
.dlg-text p {
    margin: 0;
    white-space: nowrap;
}
.dlg-text .red {
    margin-bottom: 18px;
    color: #f00;
    font-size: 15px;
    text-decoration: underline;
}
.dlg-text .small {
    font-size: 12px;
    line-height: 16px;
}
.caret {
    display: block;
    width: 1px;
    height: 18px;
    margin-top: 18px;
    background: #111;
}
.vscroll {
    display: flex;
    flex-direction: column;
    justify-content: space-between;
    align-items: center;
    width: 19px;
    padding: 8px 0;
    background: #f0f0f0;
}
.vscroll svg {
    width: 10px;
    height: 6px;
    fill: none;
    stroke: #aaa;
    stroke-width: 1.5;
}
.pointer {
    position: absolute;
    left: 244px;
    top: 55px;
    width: 9px;
    height: 20px;
    fill: none;
    stroke: #000;
}
.dlg-foot {
    display: flex;
    justify-content: flex-end;
    height: 38px;
    padding: 8px 24px 0;
}
.dlg-foot .btn {
    width: 83px;
    height: 24px;
}
</style>
